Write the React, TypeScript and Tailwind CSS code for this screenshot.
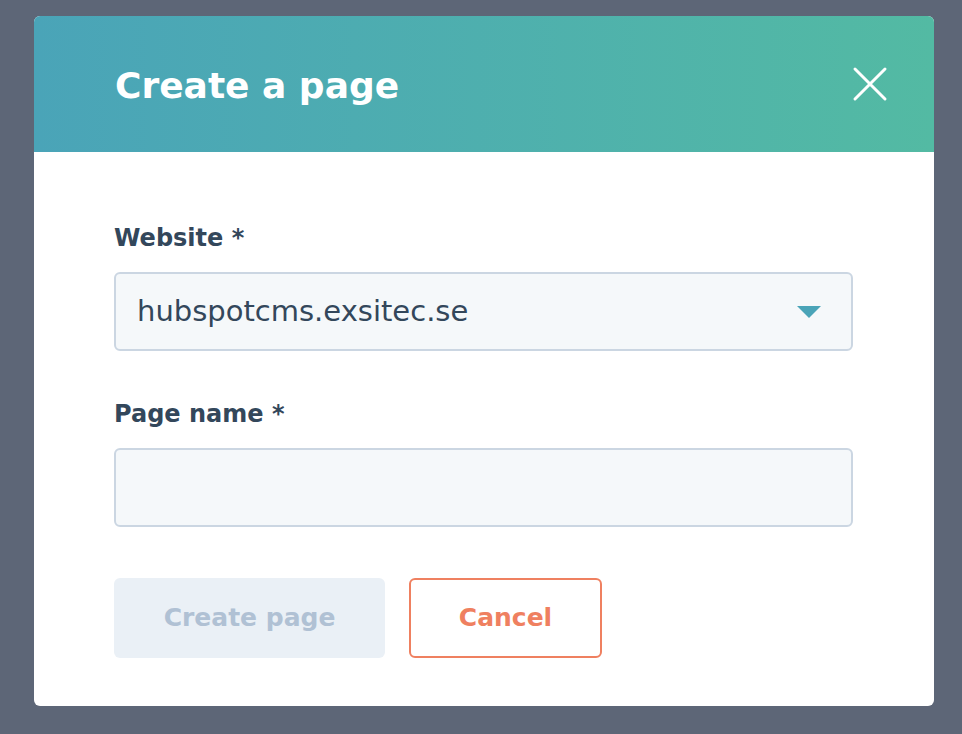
import React from "react";

export default function App() {
  return (
    <div className="w-[962px] h-[734px] bg-[#5d6677] pt-[16px] pl-[34px]" style={{ fontFamily: "'DejaVu Sans', 'Noto Sans', sans-serif" }}>
      <div className="w-[900px] h-[690px] bg-white rounded-[6px] overflow-hidden flex flex-col">
        <div className="h-[136px] shrink-0 bg-gradient-to-r from-[#4aa4b8] to-[#53baa3] flex items-center justify-between pl-[81px] pr-[46px]">
          <h1 className="text-white text-[36px] font-bold pt-[3px]">Create a page</h1>
          <svg width="36" height="36" viewBox="0 0 36 36" fill="none" stroke="white" strokeWidth="3" strokeLinecap="round">
            <path d="M3 3 L33 33 M33 3 L3 33" />
          </svg>
        </div>
        <div className="flex flex-col px-[80px] pt-[71px]">
          <label className="text-[24px] leading-[30px] font-bold text-[#33475b]">Website *</label>
          <div className="mt-[19px] h-[79px] w-[739px] rounded-[6px] border-2 border-[#cbd6e2] bg-[#f5f8fa] flex items-center justify-between pl-[21px] pr-[30px]">
            <span className="text-[29px] text-[#33475b]">hubspotcms.exsitec.se</span>
            <svg width="24" height="12" viewBox="0 0 24 12">
              <path d="M0 0 H24 L12 12 Z" fill="#4aa4b8" />
            </svg>
          </div>
          <label className="mt-[48px] text-[24px] leading-[30px] font-bold text-[#33475b]">Page name *</label>
          <div className="mt-[19px] h-[79px] w-[739px] rounded-[6px] border-2 border-[#cbd6e2] bg-[#f5f8fa]" />
          <div className="mt-[51px] flex gap-[24px]">
            <button className="w-[271px] h-[80px] rounded-[6px] bg-[#eaf0f6] text-[#b0c1d4] text-[25px] font-bold">Create page</button>
            <button className="w-[193px] h-[80px] rounded-[6px] border-2 border-[#ef8060] bg-white text-[#ef8060] text-[25px] font-bold">Cancel</button>
          </div>
        </div>
      </div>
    </div>
  );
}
